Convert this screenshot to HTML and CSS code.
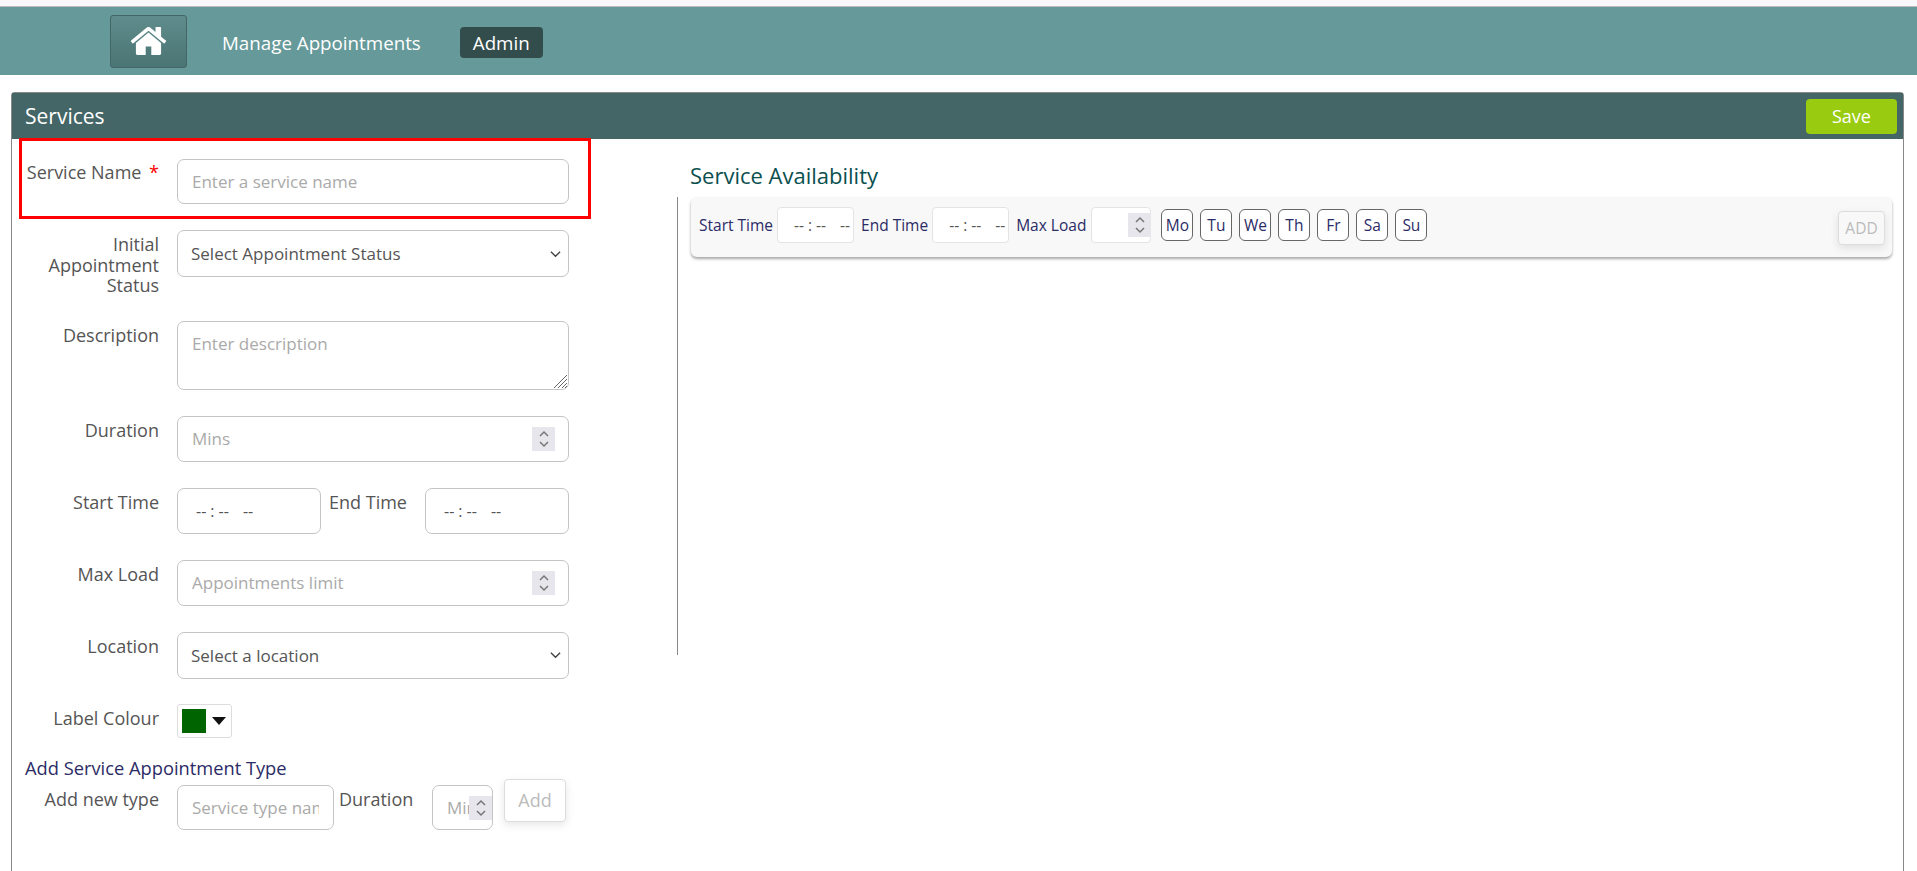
FILE: index.html
```html
<!DOCTYPE html>
<html lang="en">
<head>
  <meta charset="UTF-8" />
  <title>Services</title>
  <link rel="stylesheet" href="styles.css">
</head>
<body>
  <div class="top-strip"></div>
  <nav class="navbar">
    <a class="home-btn" href="#">
      <svg class="home-icon" viewBox="50 256 1692 1280" preserveAspectRatio="none" aria-hidden="true"><path d="M1472 992v480q0 26-19 45t-45 19h-384v-384h-256v384h-384q-26 0-45-19t-19-45v-480q0-1 .5-3t.5-3l575-474 575 474q1 2 1 6zm223-69l-62 74q-8 9-21 11h-3q-13 0-21-7l-692-577-692 577q-12 8-24 7-13-2-21-11l-62-74q-8-10-7-23.500t11-21.500l719-599q32-26 76-26t76 26l244 204v-195q0-14 9-23t23-9h192q14 0 23 9t9 23v408l219 182q10 8 11 21.500t-7 23.500z"/></svg>
    </a>
    <a class="nav-link" href="#">Manage Appointments</a>
    <a class="nav-link active" href="#">Admin</a>
  </nav>

  <section class="panel">
    <header class="panel-head">
      <h1>Services</h1>
      <button class="save-btn" type="button">Save</button>
    </header>

    <div class="panel-body">
      <form class="service-form">
        <div class="marked">
          <div class="row">
            <label class="lbl">Service Name <span class="req">*</span></label>
            <input class="field h45" type="text" placeholder="Enter a service name">
          </div>
        </div>

        <div class="row">
          <label class="lbl">Initial Appointment Status</label>
          <select class="field pick h47"><option>Select Appointment Status</option></select>
        </div>

        <div class="row desc-row">
          <label class="lbl">Description</label>
          <div class="num-wrap">
            <textarea class="field desc" placeholder="Enter description"></textarea>
            <svg class="grip" viewBox="0 0 14 14"><path d="M1 14L14 1M5 14l9-9M9 14l5-5M12 14l2-2"/></svg>
          </div>
        </div>

        <div class="row">
          <label class="lbl">Duration</label>
          <div class="num-wrap">
            <input class="field h46" type="number" placeholder="Mins">
            <span class="spin"><svg viewBox="0 0 12 20"><path d="M2 7l4-4 4 4M2 13l4 4 4-4"/></svg></span>
          </div>
        </div>

        <div class="row">
          <label class="lbl">Start Time</label>
          <div class="time-pair">
            <input class="field time h46" type="time">
            <label class="lbl-inline">End Time</label>
            <input class="field time h46" type="time">
          </div>
        </div>

        <div class="row">
          <label class="lbl">Max Load</label>
          <div class="num-wrap">
            <input class="field h46" type="number" placeholder="Appointments limit">
            <span class="spin"><svg viewBox="0 0 12 20"><path d="M2 7l4-4 4 4M2 13l4 4 4-4"/></svg></span>
          </div>
        </div>

        <div class="row">
          <label class="lbl">Location</label>
          <select class="field pick h47"><option>Select a location</option></select>
        </div>

        <div class="row colour-row">
          <label class="lbl">Label Colour</label>
          <button class="colour-btn" type="button">
            <span class="swatch"></span>
            <span class="caret"></span>
          </button>
        </div>

        <div class="add-type">
          <h2>Add Service Appointment Type</h2>
          <div class="row type-row">
            <label class="lbl">Add new type</label>
            <input class="field type-name" type="text" placeholder="Service type name">
            <label class="lbl-inline dur">Duration</label>
            <div class="num-wrap type-dur">
              <input class="field" type="number" placeholder="Mins">
              <span class="spin"><svg viewBox="0 0 12 20"><path d="M2 7l4-4 4 4M2 13l4 4 4-4"/></svg></span>
            </div>
            <button class="ghost-btn add-btn" type="button">Add</button>
          </div>
        </div>
      </form>

      <div class="availability">
        <h2>Service Availability</h2>
        <div class="avail-body">
          <div class="avail-card">
            <label>Start Time</label>
            <input class="mini time" type="time">
            <label>End Time</label>
            <input class="mini time" type="time">
            <label>Max Load</label>
            <div class="num-wrap mini-num">
              <input class="mini" type="number">
              <span class="spin"><svg viewBox="0 0 12 20"><path d="M2 7l4-4 4 4M2 13l4 4 4-4"/></svg></span>
            </div>
            <div class="days">
              <button class="day" type="button">Mo</button>
              <button class="day" type="button">Tu</button>
              <button class="day" type="button">We</button>
              <button class="day" type="button">Th</button>
              <button class="day" type="button">Fr</button>
              <button class="day" type="button">Sa</button>
              <button class="day" type="button">Su</button>
            </div>
            <button class="ghost-btn card-add" type="button">ADD</button>
          </div>
        </div>
      </div>
    </div>
  </section>
</body>
</html>
```

FILE: styles.css
```css
* {
  box-sizing: border-box;
}
html, body {
  height: 100%;
}
body {
  margin: 0;
  background: #fff;
  font-family: "Open Sans", "Noto Sans", sans-serif;
  font-size: 18px;
  color: #555;
  overflow: hidden;
}
.top-strip {
  height: 7px;
  background: #f8f8fa;
  border-bottom: 1px solid #bbb;
}
.navbar {
  height: 68px;
  background: #669999;
  display: flex;
  align-items: center;
  padding-left: 110px;
}
.home-btn {
  width: 77px;
  height: 53px;
  display: flex;
  align-items: center;
  justify-content: center;
  border: 1px solid #446666;
  border-radius: 3px;
  background: linear-gradient(#5f8c8c, #4b7474);
}
.home-icon {
  width: 37px;
  height: 28px;
  fill: #fff;
}
.nav-link {
  color: #fff;
  text-decoration: none;
  font-size: 18.750px;
}
.home-btn + .nav-link {
  margin: 3px 0 0 35px;
}
.nav-link.active {
  margin: 2px 0 0 39px;
  padding: 0 13px;
  height: 31px;
  line-height: 31px;
  background: #334d4d;
  border-radius: 4px;
}

.panel {
  height: calc(100% - 92px);
  margin: 17px 13px 0 11px;
  border: 1px solid #888;
  border-bottom: none;
  border-radius: 4px 4px 0 0;
}
.panel-head {
  height: 46px;
  background: #446666;
  display: flex;
  align-items: center;
  justify-content: space-between;
  padding: 0 6px 0 13px;
}
.panel-head h1 {
  margin: 0;
  font-size: 21px;
  font-weight: 400;
  color: #fff;
}
.save-btn {
  width: 91px;
  height: 35px;
  border: none;
  border-radius: 4px;
  background: #99cc11;
  color: #fff;
  font: 18px "Open Sans", sans-serif;
}
.panel-body {
  display: flex;
}

.service-form {
  width: 665px;
  flex: none;
  display: flex;
  flex-direction: column;
  gap: 26px;
}
.marked {
  width: 572px;
  height: 81px;
  margin: -1px 0 -15px 7px;
  border: 3px solid #f00;
  padding: 18px 0 0 0;
}
.marked .row {
  margin-left: -10px;
}
.marked .lbl {
  padding-top: 3px;
}
.row {
  display: flex;
  align-items: flex-start;
}
.desc-row {
  margin-top: -1px;
}
.lbl {
  width: 147px;
  flex: none;
  padding-top: 4px;
  margin-right: 18px;
  text-align: right;
  line-height: 20.500px;
}
.req {
  color: #f00;
  margin-left: 3px;
}
.field {
  width: 392px;
  height: 45px;
  border: 1px solid #c4c4c8;
  border-radius: 7px;
  padding: 0 14px;
  background: #fff;
  font: 17px "Open Sans", sans-serif;
  color: #555;
}
.field::placeholder {
  color: #aaa;
}
.h45 { height: 45px; }
.h46 { height: 46px; }
.h47 { height: 47px; }
.pick {
  appearance: none;
  padding-left: 13px;
  background: #fff url("data:image/svg+xml,%3Csvg xmlns='http://www.w3.org/2000/svg' viewBox='0 0 12 8'%3E%3Cpath d='M1 1.500l5 5 5-5' fill='none' stroke='%23444' stroke-width='1.500'/%3E%3C/svg%3E") no-repeat right 7px center / 11px 8px;
}
.desc {
  display: block;
  height: 69px;
  padding-top: 12px;
  resize: none;
  line-height: 20px;
}
.grip {
  position: absolute;
  right: 2px;
  bottom: 2px;
  width: 14px;
  height: 14px;
  fill: none;
  stroke: #666;
  stroke-width: 1;
}

input[type=number]::-webkit-inner-spin-button,
input[type=number]::-webkit-outer-spin-button {
  appearance: none;
  display: none;
}
input[type=time]::-webkit-calendar-picker-indicator {
  display: none;
}
input[type=time]::-webkit-datetime-edit-text {
  padding: 0 3px;
}
input[type=time]::-webkit-datetime-edit-ampm-field {
  margin-left: 4px;
}
.num-wrap {
  position: relative;
  display: block;
}
.spin {
  position: absolute;
  top: 11px;
  right: 14px;
  width: 23px;
  height: 24px;
  background: #e6e6ec;
  display: flex;
  align-items: center;
  justify-content: center;
}
.spin svg {
  width: 12px;
  height: 20px;
  fill: none;
  stroke: #777;
  stroke-width: 1.500;
}

.time-pair {
  display: flex;
  align-items: flex-start;
}
.field.time {
  width: 144px;
  padding: 0 0 0 17px;
  font-size: 16px;
}
.lbl-inline {
  line-height: 20.500px;
  padding-top: 4px;
}
.time-pair .lbl-inline {
  width: 104px;
  padding-left: 8px;
}

.colour-row {
  margin-top: -1px;
}
.colour-btn {
  width: 55px;
  height: 34px;
  padding: 0 0 0 4px;
  display: flex;
  align-items: center;
  gap: 6px;
  border: 1px solid #ddd;
  border-radius: 3px;
  background: #fff;
}
.swatch {
  width: 24px;
  height: 24px;
  background: #006400;
}
.caret {
  border: 7px solid transparent;
  border-top: 8px solid #111;
  border-bottom: none;
}

.add-type {
  margin-top: -8px;
}
.add-type h2 {
  margin: 0 0 5px 13px;
  height: 24px;
  font-size: 18.300px;
  line-height: 24px;
  font-weight: 400;
  color: #2b2b66;
}
.field.type-name {
  width: 157px;
}
.dur {
  margin-left: 5px;
  width: 93px;
}
.type-dur .field {
  width: 61px;
}
.type-dur .spin {
  right: 1px;
}
.ghost-btn {
  border: 1px solid #ddd;
  border-radius: 4px;
  background: #fff;
  color: #bbb;
  box-shadow: 0 3px 8px rgba(0, 0, 0, .1);
}
.add-btn {
  width: 62px;
  height: 43px;
  margin: -6px 0 0 11px;
  font: 18px "Open Sans", sans-serif;
}

.availability {
  flex: 1;
  padding-right: 11px;
}
.availability h2 {
  margin: 24px 0 11px 13px;
  height: 24px;
  line-height: 24px;
  font-size: 22px;
  font-weight: 400;
  color: #0b4f4f;
}
.avail-body {
  height: 458px;
  border-left: 1px solid #888;
  padding: 0 0 0 13px;
}
.avail-card {
  height: 60px;
  margin-top: -1px;
  display: flex;
  align-items: center;
  padding: 0 0 4px 8px;
  background: #f8f8f8;
  border-radius: 6px;
  box-shadow: 0 2px 3px rgba(0, 0, 0, .35);
  font-size: 15.500px;
  color: #2b2b66;
}
.mini {
  width: 77px;
  height: 36px;
  border: 1px solid #e4e4e4;
  border-radius: 4px;
  background: #fff;
  padding: 0 0 0 15px;
  font: 15.500px "Open Sans", sans-serif;
  color: #555;
}
.avail-card .mini.time {
  margin: 0 7px 0 4px;
}
.mini-num {
  width: 60px;
  margin-left: 5px;
}
.mini-num .mini {
  width: 60px;
}
.mini-num .spin {
  top: 6px;
  right: 0;
}
.days {
  display: flex;
  gap: 7px;
  margin-left: 10px;
}
.day {
  width: 32px;
  height: 32px;
  padding: 0;
  border: 1px solid #666;
  border-radius: 6px;
  background: #fff;
  font: 15.500px "Open Sans", sans-serif;
  color: #2b2b66;
}
.card-add {
  width: 47px;
  height: 34px;
  margin: 6px 7px 0 auto;
  padding: 0;
  background: #f8f8f8;
  font: 15.500px "Open Sans", sans-serif;
}
```
